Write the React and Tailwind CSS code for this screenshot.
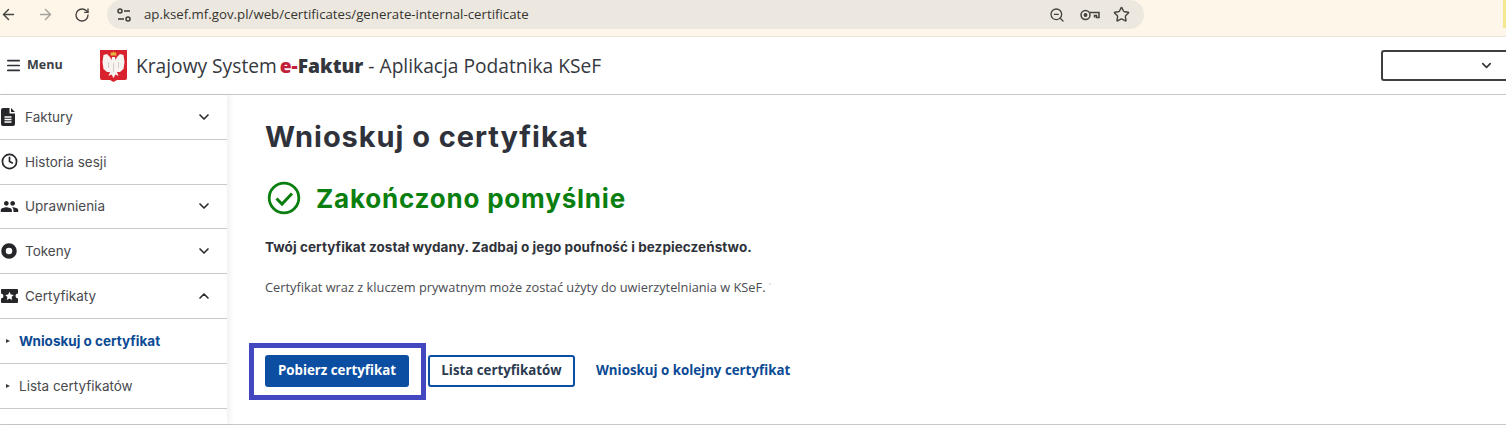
import { ArrowLeft, ArrowRight, RotateCw, ZoomOut, Star, Menu, ChevronDown, ChevronUp, Clock } from "lucide-react";
import { MdPeople } from "react-icons/md";

const sans = "font-['Open_Sans',sans-serif]";
const menuFont = "font-['Inter',sans-serif]";

function TuneIcon() {
  return (
    <svg width="18" height="18" viewBox="0 0 18 18" fill="none" stroke="#3c3a36" strokeWidth="1.500">
      <circle cx="5" cy="5" r="2" />
      <path d="M9 5h6" />
      <path d="M3 13h6" />
      <circle cx="13" cy="13" r="2" />
    </svg>
  );
}

function KeyIcon() {
  return (
    <svg width="20" height="12" viewBox="0 0 20 12" fill="none" stroke="#45433f" strokeWidth="1.500">
      <circle cx="5.500" cy="6" r="4.500" />
      <circle cx="5.500" cy="6" r="1.200" fill="#45433f" />
      <path d="M10 3.500h9v5h-2.500v-2h-2v2" />
    </svg>
  );
}

function Emblem() {
  return (
    <svg width="27" height="32" viewBox="0 0 27 32">
      <path d="M0 0h27v28q0 2-2 2h-8l-3.500 2L10 30H2q-2 0-2-2z" fill="#d8232f" />
      <path d="M12 7h3l.5 3 1.500-3 3-3 3.500 1 1 7-1 7-3.500 3-3 0 1.500 4-3-1.500-2 3.500-2-3.500-3 1.500 1.500-4-3 0-3.500-3-1-7 1-7 3.500-1 3 3 1.500 3z" fill="#f6f3f0" />
      <path d="M13.500 13v9M8.500 12v6M18.500 12v6" stroke="#d9c9c4" strokeWidth="1" />
      <path d="M11 2l1 1 1.500-1.500L15 3l1-1 .5 3.500h-6z" fill="#e6b53a" />
    </svg>
  );
}

function DocIcon() {
  return (
    <svg width="14" height="18" viewBox="0 0 14 18">
      <path d="M2 0h6.500v5.500H14V16a2 2 0 0 1-2 2H2a2 2 0 0 1-2-2V2a2 2 0 0 1 2-2z" fill="#26262a" />
      <path d="M10 0l4 4h-4z" fill="#26262a" />
      <path d="M3.500 9h7M3.500 11.500h7M3.500 14h7" stroke="#fff" strokeWidth="1.300" />
    </svg>
  );
}

function TokenIcon() {
  return (
    <svg width="16" height="16" viewBox="0 0 16 16" fill="none">
      <circle cx="8" cy="8" r="5.500" stroke="#26262a" strokeWidth="4.500" />
    </svg>
  );
}

function CertIcon() {
  return (
    <svg width="17" height="14" viewBox="0 0 17 14">
      <path d="M1 0h15a1 1 0 0 1 1 1v3.500a2.500 2.500 0 0 0 0 5V13a1 1 0 0 1-1 1H1a1 1 0 0 1-1-1V9.500a2.500 2.500 0 0 0 0-5V1a1 1 0 0 1 1-1z" fill="#26262a" />
      <path d="M8.500 2.800l1.300 2.700 3 .4-2.200 2 .6 3-2.700-1.500-2.700 1.500.6-3-2.200-2 3-.4z" fill="#fff" />
    </svg>
  );
}

function CheckIcon() {
  return (
    <svg width="34" height="34" viewBox="0 0 34 34" fill="none" stroke="#0a7f0f">
      <circle cx="17" cy="17" r="14.800" strokeWidth="2.800" />
      <path d="M9.500 17.500l5.500 5.500L25 12.500" strokeWidth="3" />
    </svg>
  );
}

function NavRow({ icon, label, chevron }) {
  return (
    <div className="h-[44.800px] flex items-center border-b border-[#c9c9c9] pl-[1px] pr-[15px]">
      <div className="w-[24px] flex items-center">{icon}</div>
      <span className="flex-1 text-[13.500px] text-[#4a4a4e]">{label}</span>
      {chevron === "down" && <ChevronDown size={16} strokeWidth={2.500} className="text-[#2c2c30]" />}
      {chevron === "up" && <ChevronUp size={16} strokeWidth={2.500} className="text-[#2c2c30]" />}
    </div>
  );
}

function SubRow({ label, active }) {
  return (
    <div className="h-[44.800px] flex items-center border-b border-[#c9c9c9] pl-[6px]">
      <span className="w-0 h-0 border-y-[2.500px] border-y-transparent border-l-[4px] border-l-[#3a3a3e] mr-[9px]" />
      <span className={active ? "text-[13.500px] font-bold text-[#0b4a94]" : "text-[13.500px] text-[#4a4a4e]"}>{label}</span>
    </div>
  );
}

export default function App() {
  return (
    <div className={`w-[1506px] h-[425px] overflow-hidden bg-white flex flex-col ${menuFont}`}>
      {/* browser bar */}
      <div className="h-[37px] shrink-0 bg-[#fdf6e9] border-b border-[#ebe6da] flex items-start relative">
        <div className="w-[107px] h-[29px] flex items-center gap-[20px] text-[#45433f]">
          <ArrowLeft size={17} />
          <ArrowRight size={17} className="text-[#a5a29b]" />
          <RotateCw size={16} />
        </div>
        <div className="w-[1037px] h-[29px] bg-[#ece8e0] rounded-[15px] flex items-center pl-[8px] pr-[14px]">
          <TuneIcon />
          <span className={`ml-[11px] flex-1 text-[13.250px] text-[#36342f] ${sans}`}>ap.ksef.mf.gov.pl/web/certificates/generate-internal-certificate</span>
          <ZoomOut size={16} className="text-[#45433f] mr-[15px]" />
          <KeyIcon />
          <Star size={17} className="text-[#45433f] ml-[13px]" />
        </div>
        <div className="absolute right-0 top-0 w-[3px] h-[28px] bg-[#f5e78e]" />
      </div>

      {/* app header */}
      <div className="h-[58px] shrink-0 border-b border-[#c8c8c8] flex items-center bg-white">
        <div className="w-[100px] flex items-center pl-[5px] gap-[5px]">
          <Menu size={17} strokeWidth={2.400} className="text-[#2f3136]" />
          <span className={`text-[12.500px] font-bold text-[#3b3e44] ${sans}`}>Menu</span>
        </div>
        <Emblem />
        <span className={`ml-[9px] mt-[2px] text-[19.200px] text-[#35383e] ${sans}`}>
          Krajowy System <span className="font-extrabold text-[#c2203a] -ml-[2px]">e-</span><span className="font-extrabold text-[#33363c]">Faktur</span> - Aplikacja Podatnika KSeF
        </span>
        <div className="ml-auto w-[125px] h-[31px] border-2 border-r-0 border-[#3f3f42] rounded-l-[3px] flex items-center justify-end pr-[12px]">
          <ChevronDown size={15} strokeWidth={2.500} className="text-[#2f3136]" />
        </div>
      </div>

      <div className="flex-1 flex border-b border-[#c8c8c8] min-h-0">
        {/* sidebar */}
        <div className="w-[227px] shrink-0 shadow-[3px_0_5px_rgba(0,0,0,0.06)] overflow-hidden">
          <NavRow icon={<DocIcon />} label="Faktury" chevron="down" />
          <NavRow icon={<Clock size={17} strokeWidth={2.400} className="text-[#26262a]" />} label="Historia sesji" />
          <NavRow icon={<MdPeople size={19} className="text-[#26262a] -ml-[1px]" />} label="Uprawnienia" chevron="down" />
          <NavRow icon={<TokenIcon />} label="Tokeny" chevron="down" />
          <NavRow icon={<CertIcon />} label="Certyfikaty" chevron="up" />
          <SubRow label="Wnioskuj o certyfikat" active />
          <SubRow label="Lista certyfikatów" />
        </div>

        {/* main content */}
        <div className="flex-1 pl-[38px] pt-[24px]">
          <h1 className="text-[29px] leading-[36px] font-bold tracking-[0.95px] text-[#2f323a]">Wnioskuj o certyfikat</h1>
          <div className="mt-[25px] flex items-center h-[36px]">
            <span className="ml-[2px]"><CheckIcon /></span>
            <span className="ml-[15px] text-[26px] font-bold tracking-[0.8px] text-[#0a7f0f]">Zakończono pomyślnie</span>
          </div>
          <p className="mt-[22px] text-[13.500px] leading-[18px] font-bold tracking-[0.07px] text-[#2f323a]">Twój certyfikat został wydany. Zadbaj o jego poufność i bezpieczeństwo.</p>
          <p className={`mt-[22px] text-[12.800px] leading-[18px] text-[#4a4c52] ${sans}`}>Certyfikat wraz z kluczem prywatnym może zostać użyty do uwierzytelniania w KSeF.<span className="text-[#c8c8c8] ml-[3px] text-[10px]">`</span></p>
          <div className={`mt-[46px] -ml-[16px] flex items-center ${sans}`}>
            <div className="border-[5px] border-[#4448c0] pl-[11px] pr-[12px] pt-[7px] pb-[8px]">
              <button className="h-[32px] w-[144px] bg-[#0b4ea2] rounded-[3px] text-[13.300px] font-bold text-white block">Pobierz certyfikat</button>
            </div>
            <button className="ml-[2px] -mt-[1px] h-[32px] w-[147px] bg-white border-2 border-[#0b4ea2] rounded-[3px] text-[13.300px] font-bold text-[#2a3a50]">Lista certyfikatów</button>
            <span className="ml-[21px] -mt-[1px] text-[13.300px] font-bold text-[#0b4a94]">Wnioskuj o kolejny certyfikat</span>
          </div>
        </div>
      </div>
    </div>
  );
}
